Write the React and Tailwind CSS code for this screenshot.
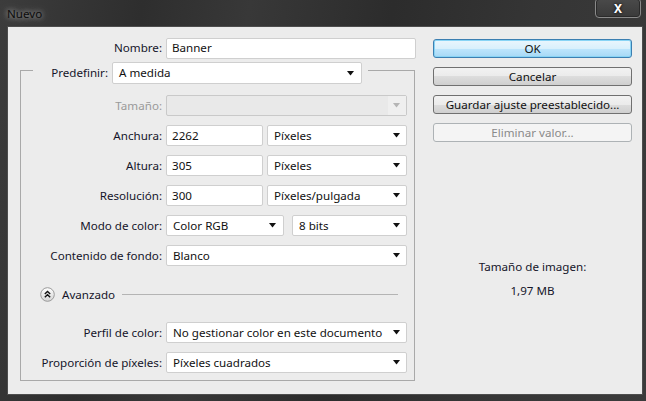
import React from "react";

const font = { fontFamily: '"Noto Sans", "Open Sans", sans-serif' };

function Arrow({ disabled }) {
  return (
    <svg width="8" height="5" viewBox="0 0 8 5" className="shrink-0">
      <path d="M0 0 H7 L3.5 4.5 Z" fill={disabled ? "#b5b5b5" : "#111"} />
    </svg>
  );
}

function Input({ w, value }) {
  return (
    <div
      className={`${w} h-[21px] bg-white border border-[#cfcfcf] rounded-[2px] flex items-center pl-[5px] text-[11.6px] text-[#111]`}
    >
      {value}
    </div>
  );
}

function Select({ w, value, pr = "pr-[5px]" }) {
  return (
    <div
      className={`${w} h-[21px] bg-white border border-[#cfcfcf] rounded-[2px] flex items-center justify-between pl-[6px] ${pr} text-[11.6px] text-[#111]`}
    >
      <span className="whitespace-nowrap">{value}</span>
      <Arrow />
    </div>
  );
}

function Label({ children, disabled, w = "w-[141px]" }) {
  return (
    <div
      className={`${w} shrink-0 text-right text-[11.6px] whitespace-nowrap ${disabled ? "text-[#9a9a9a]" : "text-[#15152a]"}`}
    >
      {children}
    </div>
  );
}

function Row({ label, disabled, children, mt = "mt-[9px]" }) {
  return (
    <div className={`flex items-center h-[21px] gap-[4px] ${mt}`}>
      <Label disabled={disabled}>{label}</Label>
      {children}
    </div>
  );
}

function Button({ children, variant }) {
  let cls =
    "border-[#707070] bg-[linear-gradient(#f2f2f2,#ebebeb_50%,#dddddd_50%,#cfcfcf)] text-[#111]";
  if (variant === "ok")
    cls =
      "border-[#3c7fb1] bg-[linear-gradient(#eaf6fd,#d9f0fc_50%,#bee6fd_50%,#a7d9f5)] text-[#111] shadow-[inset_0_0_0_1px_#88d4f5]";
  if (variant === "disabled")
    cls = "border-[#adb2b5] bg-[#f4f4f4] text-[#8a8a8a]";
  return (
    <div
      className={`w-[199px] h-[19px] border rounded-[3px] flex items-center justify-center text-[11.6px] whitespace-nowrap ${cls}`}
    >
      {children}
    </div>
  );
}

function Advanced() {
  return (
    <svg width="15" height="15" viewBox="0 0 15 15">
      <defs>
        <linearGradient id="g" x1="0" y1="0" x2="0" y2="1">
          <stop offset="0" stopColor="#ffffff" />
          <stop offset="1" stopColor="#d4d4d4" />
        </linearGradient>
      </defs>
      <circle cx="7.5" cy="7.5" r="6.8" fill="url(#g)" stroke="#9a9a9a" strokeWidth="1" />
      <path d="M4.8 7 L7.5 4.5 L10.2 7 M4.8 10.2 L7.5 7.7 L10.2 10.2" fill="none" stroke="#111" strokeWidth="1.4" />
    </svg>
  );
}

export default function App() {
  return (
    <div
      style={font}
      className="w-[646px] h-[401px] overflow-hidden flex flex-col bg-[linear-gradient(100deg,#3c3c3c_0%,#2e2e2e_20%,#383838_35%,#2c2c2c_55%,#353535_75%,#3b3b3b_100%)]"
    >
      {/* title bar */}
      <div className="h-[26px] flex items-start justify-between shrink-0">
        <div className="pl-[7px] pt-[5px] text-[11.6px] text-[#0c0c0c] [text-shadow:0_0_5px_#a8a8a8,0_0_9px_#8a8a8a]">
          Nuevo
        </div>
        <div className="mr-[5px] -mt-[2px] w-[46px] h-[20px] rounded-[4px] border border-[#8a8a8a] shadow-[inset_0_0_0_1px_#2a2a2a] bg-[linear-gradient(#4a4a4a,#3a3a3a)] flex items-center justify-center">
          <span className="text-white font-bold text-[12px] leading-none pt-[1px] [text-shadow:0_0_3px_#000]">
            X
          </span>
        </div>
      </div>

      {/* dialog panel */}
      <div className="ml-[7px] w-[636px] h-[369px] border border-[#4d4d4d] bg-[#ececec] flex shrink-0">
        {/* left */}
        <div className="w-[413px] shrink-0 flex flex-col">
          <div className="flex items-center h-[20px] gap-[4px] mt-[11px]">
            <Label w="w-[154px]">Nombre:</Label>
            <Input w="w-[250px] h-[20px]" value="Banner" />
          </div>

          {/* fieldset */}
          <div className="ml-[12px] w-[395px] mt-[4px] flex flex-col">
            <div className="flex items-start h-[22px]">
              <div className="w-[13px] h-[14px] mt-[8px] border-t border-l border-[#a9a9a9]" />
              <div className="w-[75px] h-[22px] flex items-center justify-end text-[11.6px] text-[#15152a]">
                Predefinir:
              </div>
              <div className="w-[4px]" />
              <Select w="w-[250px] h-[22px]" value="A medida" pr="pr-[6px]" />
              <div className="w-[6px]" />
              <div className="flex-1 h-[14px] mt-[8px] border-t border-r border-[#a9a9a9]" />
            </div>
            <div className="h-[297px] border-l border-r border-b border-[#a9a9a9] flex flex-col">
              <Row label="Tamaño:" disabled mt="mt-[11px]">
                <div className="w-[241px] h-[21px] border border-[#c9c9c9] rounded-[2px] bg-[#e9e9e9] flex">
                  <div className="flex-1" />
                  <div className="w-[18px] bg-[#efefef] flex items-center justify-center">
                    <Arrow disabled />
                  </div>
                </div>
              </Row>
              <Row label="Anchura:">
                <Input w="w-[97px]" value="2262" />
                <Select w="w-[140px]" value="Píxeles" />
              </Row>
              <Row label="Altura:">
                <Input w="w-[97px]" value="305" />
                <Select w="w-[140px]" value="Píxeles" />
              </Row>
              <Row label="Resolución:">
                <Input w="w-[97px]" value="300" />
                <Select w="w-[140px]" value="Píxeles/pulgada" />
              </Row>
              <Row label="Modo de color:">
                <Select w="w-[118px]" value="Color RGB" pr="pr-[6px]" />
                <div className="ml-[4px]">
                  <Select w="w-[115px]" value="8 bits" />
                </div>
              </Row>
              <Row label="Contenido de fondo:">
                <Select w="w-[241px]" value="Blanco" />
              </Row>

              <div className="flex items-center h-[15px] mt-[21px] pl-[19px]">
                <Advanced />
                <span className="ml-[7px] text-[11.6px] text-[#15152a]">Avanzado</span>
                <div className="flex-1 ml-[7px] mr-[16px] h-px bg-[#b4b4b4]" />
              </div>

              <Row label="Perfil de color:" mt="mt-[20px]">
                <Select w="w-[241px]" value="No gestionar color en este documento" />
              </Row>
              <Row label="Proporción de píxeles:">
                <Select w="w-[241px]" value="Píxeles cuadrados" />
              </Row>
            </div>
          </div>
        </div>

        {/* right */}
        <div className="pl-[12px] pt-[12px] flex flex-col gap-[9px]">
          <Button variant="ok">OK</Button>
          <Button>Cancelar</Button>
          <Button>Guardar ajuste preestablecido...</Button>
          <Button variant="disabled">Eliminar valor...</Button>
          <div className="w-[199px] mt-[107px] flex flex-col items-center text-[11.6px] text-[#15152a]">
            <div>Tamaño de imagen:</div>
            <div className="mt-[7px]">1,97 MB</div>
          </div>
        </div>
      </div>
    </div>
  );
}
